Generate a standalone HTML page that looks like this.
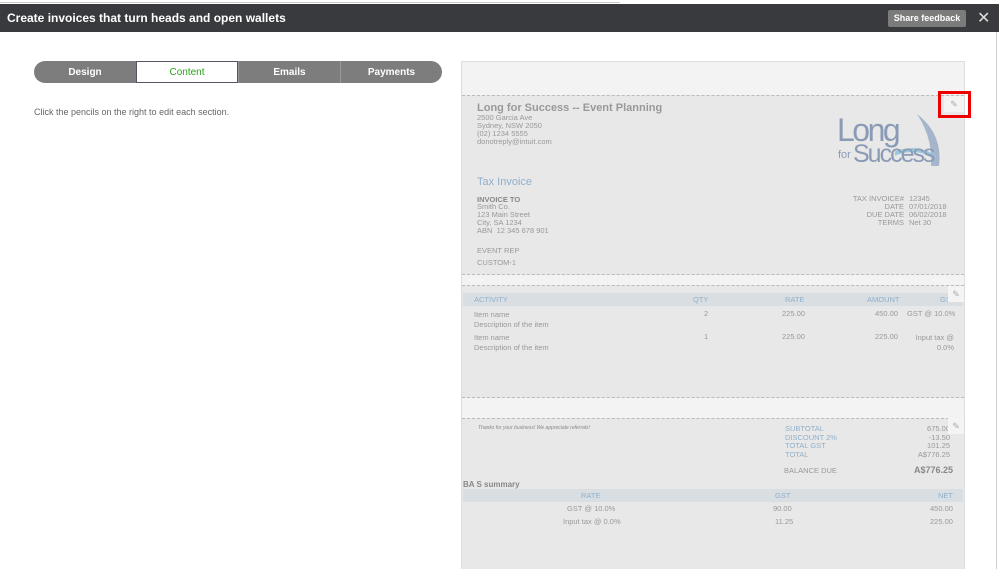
<!DOCTYPE html>
<html><head><style>
*{margin:0;padding:0;box-sizing:border-box}
body{width:999px;height:569px;overflow:hidden;background:#fff;font-family:"Liberation Sans",sans-serif;position:relative}
.a{position:absolute;white-space:nowrap}
.g{color:#999;font-size:7.5px;line-height:8px}
.b{color:#8fb0cc}
</style></head><body>
<div class="a" style="left:0;top:0;width:620px;height:3px;border-bottom:1px solid #ccc"></div>
<div class="a" style="left:0;top:4px;width:999px;height:28px;background:#393a3d"></div>
<div class="a" style="left:7px;top:11px;color:#fff;font-weight:bold;font-size:12px">Create invoices that turn heads and open wallets</div>
<div class="a" style="left:888px;top:10px;width:78px;height:17px;background:#7b7b7b;border-radius:2px;color:#fff;font-size:9px;font-weight:bold;text-align:center;line-height:17px">Share feedback</div>
<div class="a" style="left:977px;top:8px;color:#ddd;font-size:16px">✕</div>
<div class="a" style="left:996px;top:32px;width:1px;height:537px;background:#ccc"></div>
<div class="a" style="left:34px;top:61px;width:408px;height:22px;background:#7d7d7d;border-radius:11px"></div>
<div class="a" style="left:238px;top:61px;width:1px;height:22px;background:#999"></div>
<div class="a" style="left:340px;top:61px;width:1px;height:22px;background:#999"></div>
<div class="a" style="left:34px;top:62px;width:102px;line-height:22px;text-align:center;color:#fff;font-weight:bold;font-size:10px">Design</div>
<div class="a" style="left:136px;top:61px;width:102px;height:22px;background:#fff;border:1px solid #556;line-height:21px;text-align:center;color:#2ca01c;font-size:10px">Content</div>
<div class="a" style="left:239px;top:62px;width:101px;line-height:22px;text-align:center;color:#fff;font-weight:bold;font-size:10px">Emails</div>
<div class="a" style="left:341px;top:62px;width:101px;line-height:22px;text-align:center;color:#fff;font-weight:bold;font-size:10px">Payments</div>
<div class="a" style="left:34px;top:107px;color:#666;font-size:9px">Click the pencils on the right to edit each section.</div>

<div class="a" style="left:461px;top:61px;width:504px;height:508px;background:#f3f3f3;border:1px solid #ddd"></div>
<div class="a" style="left:462px;top:95px;width:502px;height:180px;background:#e8e8e8;border-top:1px dashed #bbb;border-bottom:1px dashed #bbb"></div>
<div class="a" style="left:462px;top:285px;width:502px;height:113px;background:#e8e8e8;border-top:1px dashed #bbb;border-bottom:1px dashed #bbb"></div>
<div class="a" style="left:462px;top:418px;width:502px;height:151px;background:#e8e8e8;border-top:1px dashed #bbb"></div>

<div class="a" style="left:477px;top:102px;color:#999;font-weight:bold;font-size:11px">Long for Success -- Event Planning</div>
<div class="a g" style="left:477px;top:114px">2500 Garcia Ave<br>Sydney, NSW 2050<br>(02) 1234 5555<br>donotreply@intuit.com</div>
<svg class="a" style="left:895px;top:112px" width="50" height="56"><path d="M22 2 Q48 22 44 54 L36 54 Q38 26 22 2Z" fill="#a5b6cc"/><path d="M-10 46 Q20 30 40 46" stroke="#9cc6dc" stroke-width="4" fill="none"/></svg>
<div class="a" style="left:837px;top:112px;color:#8a9bb5;font-size:32px;letter-spacing:-2.5px">Long</div>
<div class="a" style="left:838px;top:149px;color:#8a9bb5;font-size:11px">for</div>
<div class="a" style="left:853px;top:140px;color:#8a9bb5;font-size:25px;letter-spacing:-2px">Success</div>
<div class="a b" style="left:477px;top:176px;font-size:11px">Tax Invoice</div>
<div class="a" style="left:477px;top:195px;color:#888;font-size:7.5px;font-weight:bold">INVOICE TO</div>
<div class="a g" style="left:477px;top:203px">Smith Co.<br>123 Main Street<br>City, SA 1234<br>ABN &nbsp;12 345 678 901</div>
<div class="a g" style="left:800px;top:195px;width:104px;text-align:right">TAX INVOICE#<br>DATE<br>DUE DATE<br>TERMS</div>
<div class="a g" style="left:909px;top:195px">12345<br>07/01/2018<br>06/02/2018<br>Net 30</div>
<div class="a g" style="left:477px;top:247px">EVENT REP</div>
<div class="a g" style="left:477px;top:259px">CUSTOM-1</div>
<div class="a" style="left:938px;top:91px;width:33px;height:27px;border:3px solid #e00;background:transparent"></div>
<div class="a" style="left:944px;top:96px;width:20px;height:16px;background:#f4f4f4;color:#aaa;font-size:9px;text-align:center;line-height:16px">✎</div>

<div class="a" style="left:463px;top:293px;width:500px;height:13px;background:#d9dee3"></div>
<div class="a b" style="left:474px;top:295px;font-size:7.5px">ACTIVITY</div>
<div class="a b" style="left:693px;top:295px;font-size:7.5px">QTY</div>
<div class="a b" style="left:785px;top:295px;font-size:7.5px">RATE</div>
<div class="a b" style="left:867px;top:295px;font-size:7.5px">AMOUNT</div>
<div class="a b" style="left:940px;top:295px;font-size:7.5px">GS</div>
<div class="a" style="left:948px;top:286px;width:16px;height:16px;background:#f4f4f4;color:#aaa;font-size:9px;text-align:center;line-height:16px">✎</div>
<div class="a g" style="left:474px;top:310px;line-height:10px">Item name<br>Description of the item</div>
<div class="a g" style="left:704px;top:310px">2</div><div class="a g" style="left:782px;top:310px">225.00</div><div class="a g" style="left:875px;top:310px">450.00</div><div class="a g" style="left:907px;top:310px">GST @ 10.0%</div>
<div class="a g" style="left:474px;top:333px;line-height:10px">Item name<br>Description of the item</div>
<div class="a g" style="left:704px;top:333px">1</div><div class="a g" style="left:782px;top:333px">225.00</div><div class="a g" style="left:875px;top:333px">225.00</div><div class="a g" style="left:900px;top:333px;text-align:right;width:54px;line-height:10px">Input tax @<br>0.0%</div>

<div class="a" style="left:478px;top:425px;color:#888;font-size:5px;font-style:italic">Thanks for your business! We appreciate referrals!</div>
<div class="a b" style="left:785px;top:425px;font-size:7.5px;line-height:8.5px">SUBTOTAL<br>DISCOUNT 2%<br>TOTAL GST<br>TOTAL</div>
<div class="a g" style="left:900px;top:425px;width:50px;text-align:right;line-height:8.5px">675.00<br>-13.50<br>101.25<br>A$776.25</div>
<div class="a" style="left:948px;top:418px;width:16px;height:16px;background:#f4f4f4;color:#aaa;font-size:9px;text-align:center;line-height:16px">✎</div>
<div class="a g" style="left:784px;top:467px">BALANCE DUE</div>
<div class="a" style="left:914px;top:465px;color:#888;font-weight:bold;font-size:9px">A$776.25</div>
<div class="a" style="left:463px;top:480px;color:#888;font-weight:bold;font-size:8px">BA S summary</div>
<div class="a" style="left:463px;top:489px;width:500px;height:13px;background:#d9dee3"></div>
<div class="a b" style="left:581px;top:491px;font-size:7.5px">RATE</div>
<div class="a b" style="left:775px;top:491px;font-size:7.5px">GST</div>
<div class="a b" style="left:938px;top:491px;font-size:7.5px">NET</div>
<div class="a g" style="left:567px;top:505px">GST @ 10.0%</div><div class="a g" style="left:773px;top:505px">90.00</div><div class="a g" style="left:930px;top:505px">450.00</div>
<div class="a g" style="left:563px;top:518px">Input tax @ 0.0%</div><div class="a g" style="left:775px;top:518px">11.25</div><div class="a g" style="left:930px;top:518px">225.00</div>
</body></html>
